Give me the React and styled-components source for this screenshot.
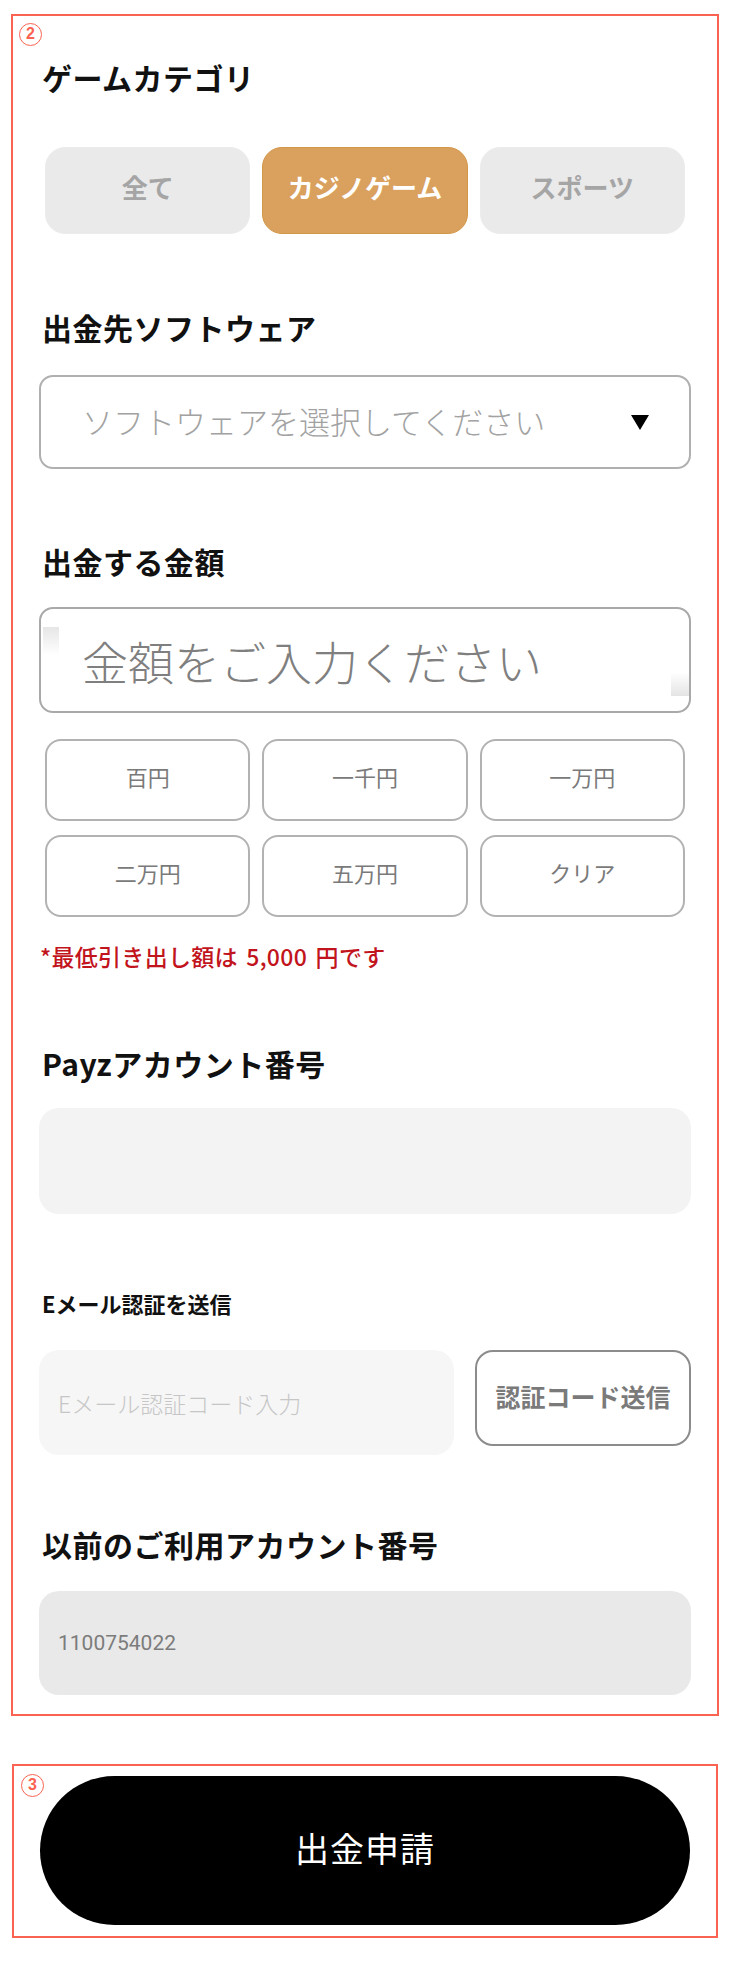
import React from 'react'
import styled, { createGlobalStyle } from 'styled-components'

const GlobalStyle = createGlobalStyle`
  body {
    margin: 0;
    background: #fff;
    font-family: 'Noto Sans CJK JP', 'Noto Sans', sans-serif;
    color: #111;
  }
  * {
    box-sizing: border-box;
  }
`

const Page = styled.div`
  width: 730px;
  padding: 14px 11px 38px;
`

const Frame = styled.section`
  position: relative;
  border: 2px solid #fa6252;
  padding: ${(p) => p.pad};
  margin-top: ${(p) => p.top || 0};
  margin-left: ${(p) => p.inset || 0};
  margin-right: ${(p) => p.inset || 0};
`

const Marker = styled.span`
  position: absolute;
  left: ${(p) => p.left};
  top: ${(p) => p.y};
  width: 23px;
  height: 23px;
  border: 1.5px solid #fa6252;
  border-radius: 50%;
  color: #fa6252;
  font-family: 'Liberation Sans', sans-serif;
  font-weight: 700;
  font-size: 16px;
  line-height: 20px;
  text-align: center;
`

const Heading = styled.h2`
  margin: ${(p) => p.top} 0 0 3px;
  font-size: ${(p) => (p.small ? '22px' : '30px')};
  line-height: ${(p) => (p.small ? '30px' : '36px')};
  font-weight: 700;
  letter-spacing: ${(p) => (p.small ? '0' : '0.5px')};
  color: #111;
`

const ChipRow = styled.div`
  display: grid;
  grid-template-columns: repeat(3, 1fr);
  gap: ${(p) => p.gap || '12px'} 12px;
  margin: ${(p) => p.top} 6px 0;
`

const CategoryChip = styled.button`
  height: 87px;
  border-radius: 20px;
  border: 1px solid ${(p) => (p.active ? '#d39748' : '#ececec')};
  background: ${(p) => (p.active ? '#daa15e' : '#eaeaea')};
  color: ${(p) => (p.active ? '#fff' : '#a5a5a5')};
  font-family: inherit;
  font-size: 26px;
  font-weight: 700;
  padding: 0 0 8px;
`

const AmountChip = styled.button`
  height: 82px;
  border-radius: 16px;
  border: 2px solid #b2b2b2;
  background: #fff;
  color: #7a7a7a;
  font-family: inherit;
  font-size: 22px;
  font-weight: 400;
  padding: 0 0 8px;
`

const SelectBox = styled.div`
  position: relative;
  margin-top: 30px;
  height: 94px;
  border: 2px solid #b0b0b0;
  border-radius: 14px;
  display: flex;
  align-items: center;
  padding: 0 40px 4px 41px;
  font-size: 31px;
  font-weight: 300;
  color: #a2a2a2;
  justify-content: space-between;
`

const Caret = styled.span`
  width: 0;
  height: 0;
  margin-top: 4px;
  border-left: 9px solid transparent;
  border-right: 9px solid transparent;
  border-top: 15px solid #000;
`

const AmountField = styled.div`
  position: relative;
  margin-top: 28px;
  height: 106px;
  border: 2px solid #a9a9a9;
  border-radius: 14px;
  overflow: hidden;

  &::before,
  &::after {
    content: '';
    position: absolute;
    background: linear-gradient(#e6e6e6, #fff);
  }
  &::before {
    left: 2px;
    top: 18px;
    width: 16px;
    height: 28px;
  }
  &::after {
    right: 0;
    bottom: 15px;
    width: 18px;
    height: 24px;
    background: linear-gradient(#fff, #e4e4e4);
  }
`

const AmountInput = styled.input`
  width: 100%;
  height: 100%;
  border: none;
  outline: none;
  background: transparent;
  padding: 0 0 0 41px;
  font-family: inherit;
  font-size: 46px;
  font-weight: 300;
  color: #333;

  &::placeholder {
    color: #7f7f7f;
  }
`

const Note = styled.p`
  margin: 24px 0 0 1px;
  font-size: 23px;
  line-height: 30px;
  letter-spacing: 0.3px;
  word-spacing: 3px;
  color: #c2141c;
  font-weight: 500;
`

const FlatInput = styled.input`
  display: block;
  width: 100%;
  height: ${(p) => p.h || '106px'};
  margin-top: ${(p) => p.top || '27px'};
  border: none;
  outline: none;
  border-radius: 20px;
  background: ${(p) => p.bg};
  padding: 0 19px;
  font-family: ${(p) => (p.mono ? "Roboto, 'Liberation Sans', sans-serif" : 'inherit')};
  font-size: ${(p) => (p.mono ? '21px' : '23px')};
  font-weight: ${(p) => (p.mono ? 400 : 300)};
  color: #7c7c7c;

  &::placeholder {
    color: #c6c6c6;
  }
`

const EmailRow = styled.div`
  display: grid;
  grid-template-columns: 415px 1fr;
  gap: 21px;
  align-items: start;
  margin-top: 32px;

  ${FlatInput} {
    margin-top: 0;
  }
`

const SendButton = styled.button`
  height: 96px;
  border: 2px solid #8c8c8c;
  border-radius: 18px;
  background: #fff;
  color: #7a7a7a;
  font-family: inherit;
  font-size: 25px;
  font-weight: 700;
  padding: 0 0 4px;
`

const SubmitButton = styled.button`
  display: block;
  width: 100%;
  height: 149px;
  border: none;
  border-radius: 75px;
  background: #000;
  color: #fff;
  font-family: inherit;
  font-size: 34px;
  font-weight: 400;
  letter-spacing: 1px;
  padding: 0 0 6px;
`

const categories = ['全て', 'カジノゲーム', 'スポーツ']
const amounts = ['百円', '一千円', '一万円', '二万円', '五万円', 'クリア']

const App = () => (
  <Page>
    <GlobalStyle />
    <Frame pad="0 26px 19px">
      <Marker left="6px" y="7px">2</Marker>

      <Heading top="43px">ゲームカテゴリ</Heading>
      <ChipRow top="52px">
        {categories.map((c) => (
          <CategoryChip key={c} active={c === 'カジノゲーム'}>
            {c}
          </CategoryChip>
        ))}
      </ChipRow>

      <Heading top="75px">出金先ソフトウェア</Heading>
      <SelectBox>
        <span>ソフトウェアを選択してください</span>
        <Caret />
      </SelectBox>

      <Heading top="74px">出金する金額</Heading>
      <AmountField>
        <AmountInput placeholder="金額をご入力ください" />
      </AmountField>
      <ChipRow top="26px" gap="14px">
        {amounts.map((a) => (
          <AmountChip key={a}>{a}</AmountChip>
        ))}
      </ChipRow>
      <Note>*最低引き出し額は 5,000 円です</Note>

      <Heading top="74px">Payzアカウント番号</Heading>
      <FlatInput bg="#f3f3f3" />

      <Heading small top="74px">Eメール認証を送信</Heading>
      <EmailRow>
        <FlatInput bg="#f6f6f6" h="105px" placeholder="Eメール認証コード入力" />
        <SendButton>認証コード送信</SendButton>
      </EmailRow>

      <Heading top="71px">以前のご利用アカウント番号</Heading>
      <FlatInput bg="#e9e9e9" h="104px" mono readOnly value="1100754022" top="29px" />
    </Frame>

    <Frame pad="10px 26px 11px" top="48px" inset="1px">
      <Marker left="7px" y="8px">3</Marker>
      <SubmitButton>出金申請</SubmitButton>
    </Frame>
  </Page>
)

export default App
